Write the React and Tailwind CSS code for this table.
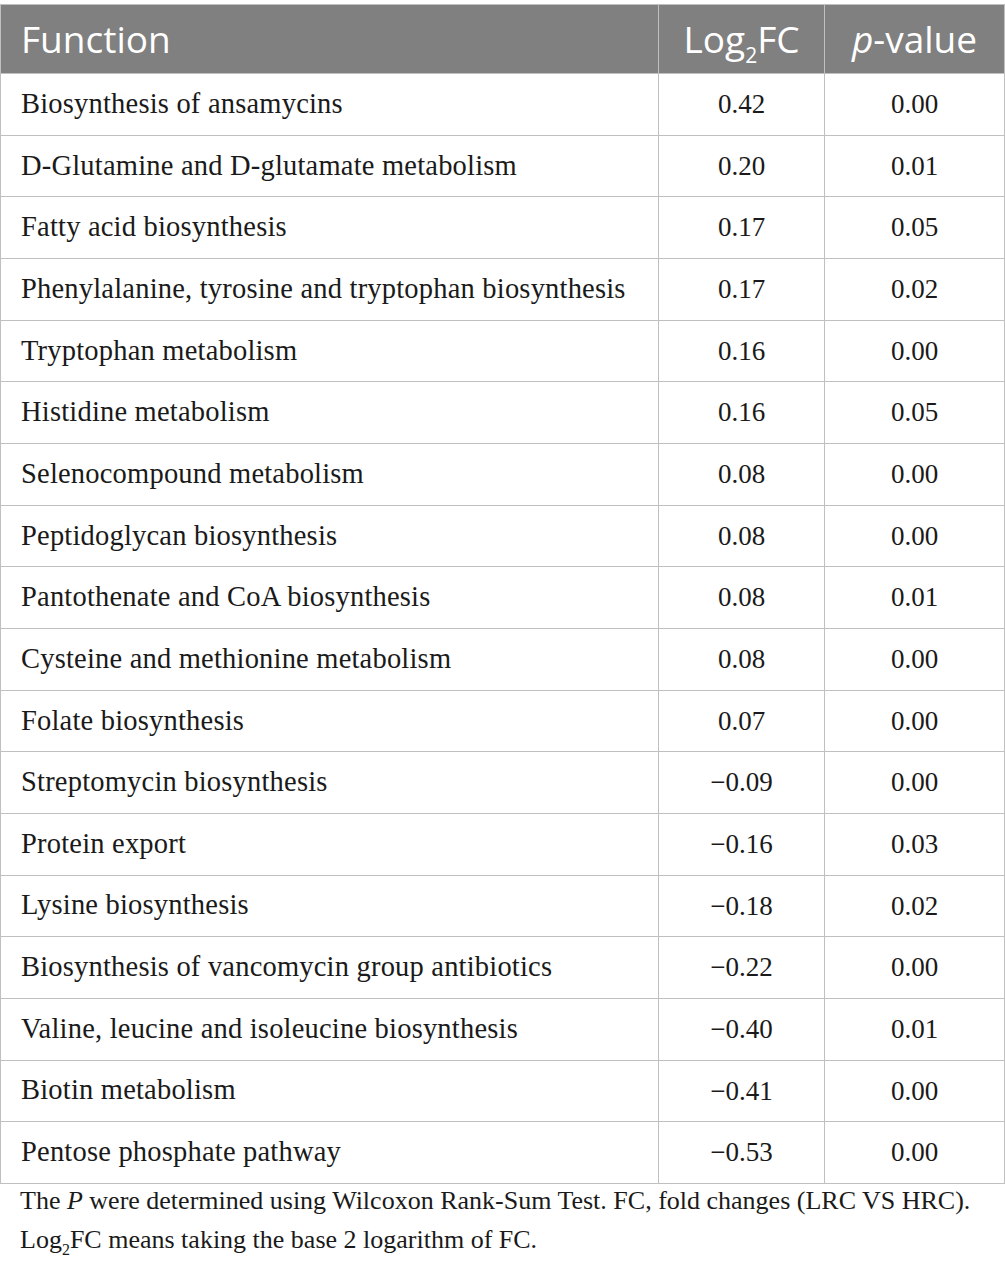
const rows = [
  ['Biosynthesis of ansamycins', '0.42', '0.00'],
  ['D-Glutamine and D-glutamate metabolism', '0.20', '0.01'],
  ['Fatty acid biosynthesis', '0.17', '0.05'],
  ['Phenylalanine, tyrosine and tryptophan biosynthesis', '0.17', '0.02'],
  ['Tryptophan metabolism', '0.16', '0.00'],
  ['Histidine metabolism', '0.16', '0.05'],
  ['Selenocompound metabolism', '0.08', '0.00'],
  ['Peptidoglycan biosynthesis', '0.08', '0.00'],
  ['Pantothenate and CoA biosynthesis', '0.08', '0.01'],
  ['Cysteine and methionine metabolism', '0.08', '0.00'],
  ['Folate biosynthesis', '0.07', '0.00'],
  ['Streptomycin biosynthesis', '\u22120.09', '0.00'],
  ['Protein export', '\u22120.16', '0.03'],
  ['Lysine biosynthesis', '\u22120.18', '0.02'],
  ['Biosynthesis of vancomycin group antibiotics', '\u22120.22', '0.00'],
  ['Valine, leucine and isoleucine biosynthesis', '\u22120.40', '0.01'],
  ['Biotin metabolism', '\u22120.41', '0.00'],
  ['Pentose phosphate pathway', '\u22120.53', '0.00'],
];

export default function App() {
  return (
    <div className="w-[1005px] bg-white pt-[4px] font-['Liberation_Serif',serif] text-[#1a1a1a]">
      <table className="w-[1004px] border-collapse table-fixed">
        <colgroup>
          <col className="w-[658px]" />
          <col className="w-[166px]" />
          <col className="w-[180px]" />
        </colgroup>
        <thead>
          <tr className="h-[69px] bg-[#808080] text-white font-['Open_Sans',sans-serif] text-[37px]">
            <th className="border border-[#c0c0c0] pl-[20px] text-left font-normal">Function</th>
            <th className="border border-[#c0c0c0] text-center font-normal">
              Log<sub className="text-[21px] align-[-4px]">2</sub>FC
            </th>
            <th className="border border-[#c0c0c0] text-center font-normal">
              <i>p</i>-value
            </th>
          </tr>
        </thead>
        <tbody>
          {rows.map(([name, fc, p]) => (
            <tr key={name} className="h-[61.67px]">
              <td className="border border-[#c0c0c0] pl-[20px] text-[28.5px] tracking-[0.2px]">{name}</td>
              <td className="border border-[#c0c0c0] text-center text-[27px]">{fc}</td>
              <td className="border border-[#c0c0c0] text-center text-[27px]">{p}</td>
            </tr>
          ))}
        </tbody>
      </table>
      <div className="-mt-[3px] pl-[20px] text-[26px] leading-[39px]">
        <p>
          The <i>P</i> were determined using Wilcoxon Rank-Sum Test. FC, fold changes (LRC VS HRC).
        </p>
        <p>
          Log<sub className="text-[16px] align-[-3px]">2</sub>FC means taking the base 2 logarithm of FC.
        </p>
      </div>
    </div>
  );
}
